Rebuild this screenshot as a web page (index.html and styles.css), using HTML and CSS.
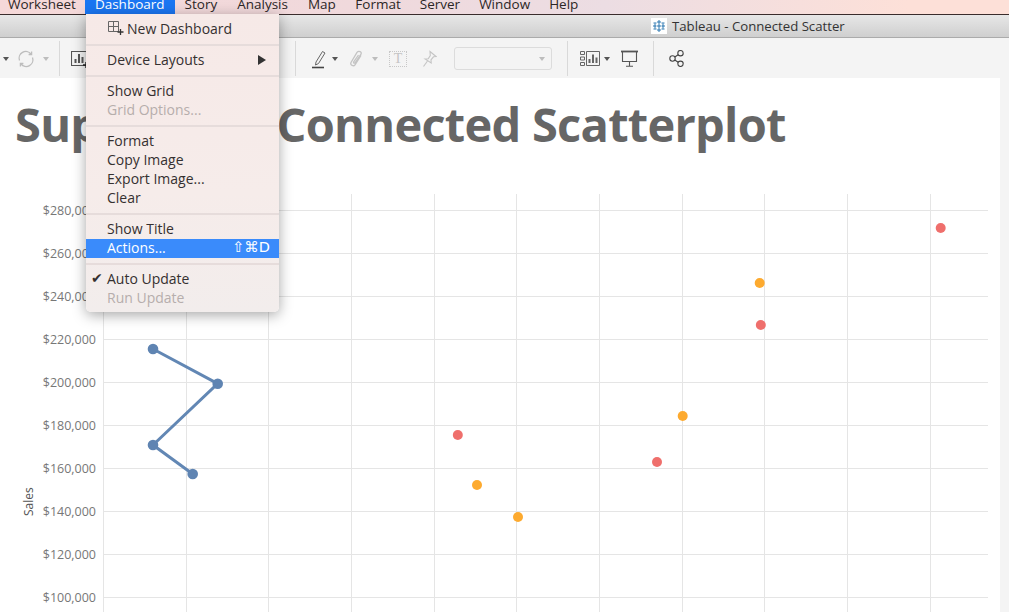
FILE: index.html
```html
<!DOCTYPE html>
<html lang="en">
<head>
	<meta charset="UTF-8">
	<title>Tableau - Connected Scatter</title>
	<link rel="stylesheet" href="styles.css">
</head>
<body>
	<div class="menubar">
		<div class="barItem first">Worksheet</div>
		<div class="barItem active">Dashboard</div>
		<div class="barItem">Story</div>
		<div class="barItem">Analysis</div>
		<div class="barItem">Map</div>
		<div class="barItem">Format</div>
		<div class="barItem">Server</div>
		<div class="barItem">Window</div>
		<div class="barItem">Help</div>
	</div>
	<div class="titlebar">
		<svg class="logo" width="16" height="16" viewBox="0 0 16 16">
			<rect width="16" height="16" fill="#fff"/>
			<g stroke="#2a76b0" stroke-width="1" fill="none">
				<path d="M8 2v12M5.500 8h5M2 8h3M11 8h3M6 4h4M6 12h4"/>
				<path d="M4 5.500v5M12 5.500v5M2.500 5h3M10.500 5h3M2.500 11h3M10.500 11h3"/>
			</g>
		</svg>
		<span>Tableau - Connected Scatter</span>
	</div>
	<div class="toolbar">
		<div class="group groupA">
			<i class="arrow"></i>
			<svg class="refresh" width="18" height="18" viewBox="0 0 18 18" fill="none" stroke="#bdbdbd" stroke-width="1.300">
				<path d="M2.500 10.500A6.700 6.700 0 0 1 14 4"/>
				<path d="M15.500 7.500A6.700 6.700 0 0 1 4 14"/>
				<path d="M14.600 1.500V4.500H11.600M3.400 16.500V13.500H6.400"/>
			</svg>
			<i class="arrow off"></i>
		</div>
		<div class="sep"></div>
		<div class="group groupB">
			<svg width="20" height="18" viewBox="0 0 20 18" fill="none" stroke="#555" stroke-width="1.100">
				<path d="M.5 1.500h15v14H.5z"/>
				<path d="M4.500 13V9M8 13V4M11.500 13V7" stroke-width="2"/>
				<path d="M15 12v6M12 15h6" stroke="#222" stroke-width="1.400"/>
			</svg>
		</div>
		<div class="sep"></div>
		<div class="group groupC">
			<svg width="14" height="20" viewBox="0 0 14 20" fill="none" stroke="#666" stroke-width="1">
				<path d="M4 13L10.500 2.500l2.500 1.500L6.500 14.500l-3 1.500z"/>
				<path d="M0 18.500h12" stroke="#444" stroke-width="1.600"/>
			</svg>
			<i class="arrow penArrow"></i>
			<svg class="clip" width="14" height="18" viewBox="0 0 14 18" fill="none" stroke="#c4c4c4" stroke-width="1.300">
				<path d="M12 5.500L6 14.800c-1.300 2-5.200 .3-4-2.300L8 2.400c1.600-2.200 5.200-.6 4 1.800L6.200 12.600c-.7 1-2 .4-1.500-.7L9.500 5"/>
			</svg>
			<i class="arrow off clipArrow"></i>
			<div class="textBox">T</div>
			<svg class="pin" width="15" height="18" viewBox="0 0 15 18" fill="none" stroke="#c4c4c4" stroke-width="1.100">
				<path d="M8 1.500l6 5-2.500.3-2.500 3 .2 3.200L3 9l3.200-.3L8.300 5.500z"/>
				<path d="M5.500 11L1.500 16.500"/>
			</svg>
			<div class="combo"><i class="arrow off"></i></div>
		</div>
		<div class="sep"></div>
		<div class="group groupD">
			<svg width="20" height="17" viewBox="0 0 20 17" fill="none" stroke="#666" stroke-width="1">
				<path d="M.5 1.500h4v3h-4zM.5 7h4v3h-4zM.5 12.500h4v3h-4zM6.500 1.500h13v14h-13z"/>
				<path d="M9.500 13V9M13 13V4.500M16.500 13V7.500" stroke-width="2"/>
			</svg>
			<i class="arrow barArrow"></i>
			<svg class="screen" width="17" height="17" viewBox="0 0 17 17" fill="none" stroke="#555" stroke-width="1.100">
				<path d="M0 1.500h17" stroke-width="1.800"/>
				<path d="M1.500 2v9.500h14V2M8.500 11.500V16M5 16.300h7"/>
			</svg>
		</div>
		<div class="sep"></div>
		<div class="group groupE">
			<svg width="15" height="17" viewBox="0 0 15 17" fill="none" stroke="#444" stroke-width="1.100">
				<circle cx="3.500" cy="8.500" r="2.700"/>
				<circle cx="11.500" cy="3.200" r="2.700"/>
				<circle cx="11.500" cy="13.800" r="2.700"/>
				<path d="M5.800 7L9.200 4.700M5.800 10L9.200 12.300"/>
			</svg>
		</div>
	</div>
	<div class="workspace">
		<div class="canvas">
			<h1 class="bigTitle">Superstore Connected Scatterplot</h1>
			<svg class="chart" width="1000" height="424" viewBox="0 188 1000 424">
				<g class="grid">
					<path d="M103 210.500H988M103 253.500H988M103 296.500H988M103 339.500H988M103 382.500H988M103 425.500H988M103 468.500H988M103 511.500H988M103 554.500H988M103 597.500H988"/>
					<path d="M103.500 194V612M186.500 194V612M268.500 194V612M351.500 194V612M434.500 194V612M516.500 194V612M599.500 194V612M682.500 194V612M764.500 194V612M847.500 194V612M930.500 194V612"/>
				</g>
				<g class="ticks">
					<text x="96" y="215">$280,000</text>
					<text x="96" y="258">$260,000</text>
					<text x="96" y="301">$240,000</text>
					<text x="96" y="344">$220,000</text>
					<text x="96" y="387">$200,000</text>
					<text x="96" y="430">$180,000</text>
					<text x="96" y="473">$160,000</text>
					<text x="96" y="516">$140,000</text>
					<text x="96" y="559">$120,000</text>
					<text x="96" y="602">$100,000</text>
				</g>
				<text class="axisName" transform="translate(33 516) rotate(-90)">Sales</text>
				<path class="trail" d="M153 349L217.700 383.700L153 445L192.700 474"/>
				<g class="blue">
					<circle cx="153" cy="349" r="5.300"/>
					<circle cx="217.700" cy="383.700" r="5.300"/>
					<circle cx="153" cy="445" r="5.300"/>
					<circle cx="192.700" cy="474" r="5.300"/>
				</g>
				<g class="red">
					<circle cx="940.700" cy="228" r="5"/>
					<circle cx="760.800" cy="325" r="5"/>
					<circle cx="457.800" cy="435" r="5"/>
					<circle cx="657" cy="462" r="5"/>
				</g>
				<g class="orange">
					<circle cx="759.700" cy="283" r="5"/>
					<circle cx="682.700" cy="416" r="5"/>
					<circle cx="477" cy="485" r="5"/>
					<circle cx="518" cy="517" r="5"/>
				</g>
			</svg>
		</div>
	</div>
	<div class="menu">
		<div class="item">
			<svg class="newIcon" width="16" height="15" viewBox="0 0 16 15" fill="none" stroke="#666" stroke-width="1">
				<path d="M.5 .5h10v10H.5zM5.500 .5v10M.5 5.500h10"/>
				<path d="M12.500 8v6M9.500 11h6" stroke="#333" stroke-width="1.300"/>
			</svg>
			New Dashboard
		</div>
		<div class="line"></div>
		<div class="item">Device Layouts<i class="sub"></i></div>
		<div class="line"></div>
		<div class="item">Show Grid</div>
		<div class="item off">Grid Options...</div>
		<div class="line"></div>
		<div class="item">Format</div>
		<div class="item">Copy Image</div>
		<div class="item">Export Image...</div>
		<div class="item">Clear</div>
		<div class="line"></div>
		<div class="item">Show Title</div>
		<div class="item now">Actions...<span class="keys">⇧⌘D</span></div>
		<div class="line"></div>
		<div class="item"><span class="tick">✔</span>Auto Update</div>
		<div class="item off">Run Update</div>
	</div>
</body>
</html>
```

FILE: styles.css
```css
*{
	box-sizing: border-box;
}
html,body{
	margin: 0;
	height: 100%;
	overflow: hidden;
}
body{
	width: 1009px;
	height: 612px;
	font-family: "Open Sans", "Liberation Sans", sans-serif;
	background: #f4f4f4;
	color: #333;
}
.menubar{
	display: flex;
	align-items: flex-end;
	height: 15px;
	border-bottom: 1px solid #3a2c2c;
	background: linear-gradient(90deg, #f5d8d8 0%, #f0d9dc 35%, #ecdde3 60%, #fde0d8 90%, #fde0d8 100%);
	overflow: hidden;
	font-size: 13.500px;
	line-height: 14px;
	color: #2c2626;
}
.barItem{
	flex: none;
	padding: 0 10px 3px;
	height: 17px;
}
.barItem:nth-child(n+6){
	padding: 0 9.500px 3px;
}
.barItem.first{
	padding: 0 9px 3px 8px;
}
.barItem.active{
	background: #1a76f2;
	color: #fff;
}
.titlebar{
	display: flex;
	align-items: center;
	gap: 5px;
	height: 23px;
	padding-left: 651px;
	background: linear-gradient(#e7e7e7, #cfcfcf);
	border-bottom: 1px solid #ababab;
	font-size: 13.200px;
	color: #333;
}
.toolbar{
	display: flex;
	height: 40px;
	background: #f4f4f4;
	padding-top: 3px;
}
.sep{
	flex: none;
	width: 1px;
	height: 35px;
	background: #d9d9d9;
}
.group{
	flex: none;
	display: flex;
	align-items: center;
	height: 35px;
}
.groupA{
	width: 59px;
	padding-left: 3px;
}
.groupB{
	width: 235px;
	padding-left: 11px;
}
.groupC{
	width: 271px;
	padding-left: 16px;
}
.groupD{
	width: 85px;
	padding-left: 12px;
}
.groupE{
	padding-left: 15px;
}
.arrow{
	width: 0;
	height: 0;
	border-left: 3px solid transparent;
	border-right: 3px solid transparent;
	border-top: 4px solid #555;
}
.arrow.off{
	border-top-color: #bdbdbd;
}
.refresh{
	margin: 0 8px;
}
.penArrow{
	margin-left: 6px;
}
.clip{
	margin-left: 11px;
}
.clipArrow{
	margin-left: 9px;
}
.textBox{
	width: 18px;
	height: 16px;
	margin-left: 11px;
	border: 1px dotted #c8c8c8;
	font: 14px/14px "Liberation Serif", serif;
	text-align: center;
	color: #c4c4c4;
}
.pin{
	margin-left: 15px;
}
.combo{
	display: flex;
	align-items: center;
	justify-content: flex-end;
	width: 98px;
	height: 23px;
	margin-left: 17px;
	padding-right: 6px;
	border: 1px solid #dcdcdc;
	border-radius: 3px;
}
.barArrow{
	margin-left: 4px;
}
.screen{
	margin-left: 11px;
}
.workspace{
	display: flex;
	height: 534px;
	padding-right: 9px;
}
.canvas{
	flex: 1;
	background: #fff;
	overflow: hidden;
}
.bigTitle{
	height: 110px;
	margin: 0;
	padding: 11px 0 0 15px;
	font-size: 47px;
	line-height: 70px;
	font-weight: 700;
	letter-spacing: -0.750px;
	color: #666;
	white-space: nowrap;
}
.chart{
	display: block;
}
.grid path{
	fill: none;
	stroke: #e5e5e5;
	stroke-width: 1;
}
.ticks text{
	font-size: 12.500px;
	fill: #777;
	text-anchor: end;
}
.axisName{
	font-size: 12px;
	fill: #555;
}
.trail{
	fill: none;
	stroke: #6287b4;
	stroke-width: 3;
}
.blue{
	fill: #5f84b2;
}
.red{
	fill: #ef6f6c;
}
.orange{
	fill: #fdaa2f;
}
.menu{
	position: absolute;
	top: 14px;
	left: 86px;
	width: 193px;
	height: 298px;
	padding: 5px 0;
	background: linear-gradient(#f6e9e7, #f6ecea 60%, #f2edec);
	border-radius: 0 0 5px 5px;
	box-shadow: 0 3px 14px rgba(0,0,0,.35);
	font-size: 14px;
	color: #353030;
}
.item{
	position: relative;
	display: flex;
	align-items: center;
	height: 19px;
	padding-left: 21px;
	line-height: 19px;
}
.item:first-child{
	padding-bottom: 1px;
}
.item.off{
	color: #b6aeac;
}
.item.now{
	margin-top: 1px;
	padding-bottom: 2px;
	background: #3a8bfb;
	color: #fff;
}
.line{
	height: 12px;
	padding: 6px 0 4px;
	background: #e6dcdb content-box;
}
.now + .line{
	height: 11px;
	padding: 5px 0 4px;
}
.newIcon{
	margin-left: 1px;
	margin-right: 3px;
}
.sub{
	position: absolute;
	right: 13px;
	top: 5px;
	border-left: 8px solid #333;
	border-top: 5px solid transparent;
	border-bottom: 5px solid transparent;
}
.keys{
	margin-left: auto;
	padding-right: 9px;
	font-family: "DejaVu Sans", sans-serif;
	font-size: 14.500px;
}
.tick{
	position: absolute;
	left: 5px;
	font-family: "DejaVu Sans", sans-serif;
	font-size: 14px;
}
```
